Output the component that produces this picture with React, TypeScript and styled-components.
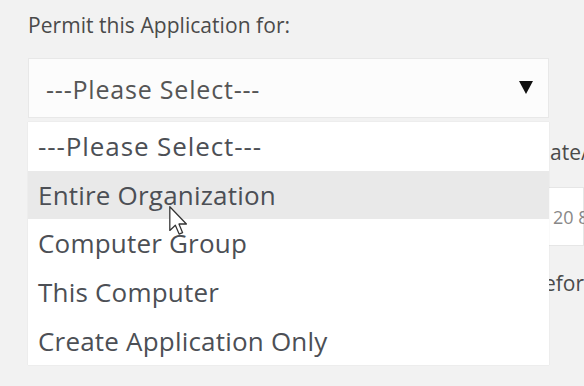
import React from "react";
import styled, { createGlobalStyle } from "styled-components";

const options = [
  "---Please Select---",
  "Entire Organization",
  "Computer Group",
  "This Computer",
  "Create Application Only",
];

const App: React.FC = () => {
  const hovered = 1;

  return (
    <>
      <GlobalStyle />
      <Page>
        <Label>Permit this Application for:</Label>
        <FormRow>
          <SelectColumn>
            <SelectBox>
              <SelectValue>---Please Select---</SelectValue>
              <Caret />
            </SelectBox>
            <Menu>
              {options.map((opt, i) => (
                <MenuItem key={opt} active={i === hovered} placeholder={i === 0}>
                  {opt}
                </MenuItem>
              ))}
            </Menu>
            <Pointer viewBox="0 0 12 19" width={19} height={30}>
              <path
                d="M0.5 0.5 L0.5 15.5 L4 12.2 L6.4 17.8 L8.6 16.9 L6.3 11.4 L11 11.4 Z"
                fill="#fff"
                stroke="#333"
                strokeWidth="0.8"
                strokeLinejoin="round"
              />
            </Pointer>
          </SelectColumn>
          <SideColumn>
            <SideLabel>ate/</SideLabel>
            <SideInput>20 8</SideInput>
            <SideNote>efor</SideNote>
          </SideColumn>
        </FormRow>
      </Page>
    </>
  );
};

export default App;

const GlobalStyle = createGlobalStyle`
  html, body {
    margin: 0;
    padding: 0;
    background: #f2f2f2;
  }
  body {
    font-family: "Open Sans", "Noto Sans", sans-serif;
    color: #505050;
  }
`;

const Page = styled.div`
  width: 584px;
  height: 386px;
  overflow: hidden;
  padding: 11px 0 0 28px;
  box-sizing: border-box;
`;

const Label = styled.div`
  font-size: 21px;
  line-height: 28px;
  color: #4a4a4a;
  letter-spacing: 0.05px;
`;

const FormRow = styled.div`
  display: flex;
  margin-top: 19px;
`;

const SelectColumn = styled.div`
  position: relative;
  width: 521px;
  flex-shrink: 0;
`;

const SelectBox = styled.div`
  height: 60px;
  box-sizing: border-box;
  background: #fcfcfc;
  border: 1px solid #e8e8e8;
  display: flex;
  align-items: center;
  justify-content: space-between;
  padding: 0 15px 0 17px;
`;

const SelectValue = styled.span`
  font-size: 25px;
  color: #555;
  margin-top: 1px;
  letter-spacing: 0.8px;
`;

const Caret = styled.span`
  width: 0;
  height: 0;
  border-left: 7px solid transparent;
  border-right: 7px solid transparent;
  border-top: 13px solid #111;
  margin-top: -2px;
`;

const Menu = styled.ul`
  position: absolute;
  top: 64px;
  left: 0;
  width: 100%;
  margin: 0;
  padding: 0;
  list-style: none;
  background: #fff;
  box-shadow: 0 0 1px rgba(0, 0, 0, 0.12);
  z-index: 2;
`;

const MenuItem = styled.li<{ active?: boolean; placeholder?: boolean }>`
  height: 48.6px;
  display: flex;
  align-items: center;
  padding-left: 10px;
  font-size: 26px;
  color: #4c4f55;
  letter-spacing: ${(p) => (p.placeholder ? "0.9px" : "0.2px")};
  background: ${(p) => (p.active ? "#e9e9e9" : "#fff")};
`;

const Pointer = styled.svg`
  position: absolute;
  left: 141px;
  top: 148px;
  z-index: 3;
`;

const SideColumn = styled.div`
  flex: 1;
  overflow: hidden;
  padding-top: 81px;
`;

const SideLabel = styled.div`
  font-size: 21px;
  line-height: 26px;
  color: #4a4a4a;
  white-space: nowrap;
  margin-left: 1px;
`;

const SideInput = styled.div`
  margin-top: 22px;
  height: 59px;
  box-sizing: border-box;
  background: #fff;
  border: 1px solid #e6e6e6;
  border-left: none;
  display: flex;
  align-items: center;
  padding-left: 4px;
  font-size: 18px;
  color: #888;
  white-space: nowrap;
`;

const SideNote = styled.div`
  margin-top: 24px;
  margin-left: -5px;
  font-size: 21px;
  line-height: 26px;
  color: #4a4a4a;
  white-space: nowrap;
`;
